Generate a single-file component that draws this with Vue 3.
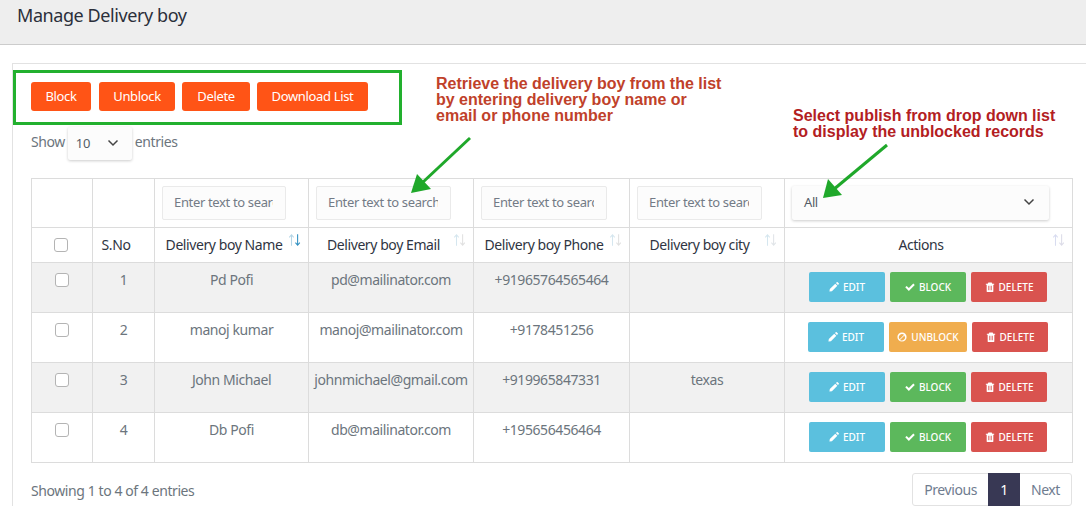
<template>
  <div class="page">
    <header class="top">
      <h1>Manage Delivery boy</h1>
    </header>

    <section class="card">
      <div class="bulk">
        <button v-for="b in bulkButtons" :key="b.label" class="bulk-btn" :style="{ width: b.w + 'px' }">{{ b.label }}</button>
      </div>

      <div class="length">
        <span class="lbl">Show</span>
        <div class="fake-select small">
          <span>10</span>
          <svg class="chev" viewBox="0 0 12 8"><path d="M1.500 1.500 6 6l4.500-4.500" /></svg>
        </div>
        <span class="lbl">entries</span>
      </div>

      <table class="grid">
        <colgroup>
          <col v-for="w in colWidths" :key="w.id" :style="{ width: w.px + 'px' }">
        </colgroup>
        <thead>
          <tr class="filters">
            <td></td>
            <td></td>
            <td v-for="f in filterWidths" :key="f.id">
              <input class="search" :style="{ width: f.w + 'px' }" type="text" placeholder="Enter text to search">
            </td>
            <td>
              <div class="fake-select wide">
                <span>All</span>
                <svg class="chev" viewBox="0 0 12 8"><path d="M1.500 1.500 6 6l4.500-4.500" /></svg>
              </div>
            </td>
          </tr>
          <tr class="heads">
            <th class="check-head"><span class="box"></span></th>
            <th>S.No</th>
            <th v-for="h in heads" :key="h.label">
              {{ h.label }}
              <svg class="sort" viewBox="0 0 16 15">
                <path :stroke="h.up" d="M4 14V2M1.500 4.500 4 1.500l2.500 3" />
                <path :stroke="h.down" d="M11 1v12M8.500 10.500l2.500 3 2.500-3" />
              </svg>
            </th>
          </tr>
        </thead>
        <tbody>
          <tr v-for="(r, i) in rows" :key="r.no" :class="{ odd: i % 2 === 0 }">
            <td><span class="box"></span></td>
            <td>{{ r.no }}</td>
            <td>{{ r.name }}</td>
            <td>{{ r.email }}</td>
            <td>{{ r.phone }}</td>
            <td>{{ r.city }}</td>
            <td class="acts">
              <button class="act info">
                <svg viewBox="0 0 12 12"><path d="M0.500 11.500 1 8.500 7.500 2l2.500 2.500L3.500 11zM8.300 1.200 9.300.3a.8.8 0 0 1 1.100 0l1.300 1.300a.8.8 0 0 1 0 1.100l-1 1z" /></svg>
                EDIT
              </button>
              <button v-if="r.blocked" class="act warn long">
                <svg viewBox="0 0 12 12"><path fill-rule="evenodd" d="M6 .5a5.500 5.500 0 1 0 0 11 5.500 5.500 0 0 0 0-11zM3.200 8.700A3.800 3.800 0 0 1 8.500 3.300zM3.600 9.500l5.300-5.300a3.800 3.800 0 0 1-5.300 5.300z" /></svg>
                UNBLOCK
              </button>
              <button v-else class="act ok">
                <svg viewBox="0 0 12 12"><path d="M.3 6.400 2 4.700l2.600 2.600L10 1.900l1.700 1.700-7.100 7.100z" /></svg>
                BLOCK
              </button>
              <button class="act danger">
                <svg viewBox="0 0 12 12"><path fill-rule="evenodd" d="M4 .5h4l.8 1.500H11v1.200h-1V11a1 1 0 0 1-1 1H3a1 1 0 0 1-1-1V3.200H1V2h2.200zM4.800 4.500H4v5.500h.8zM6.400 4.500h-.8v5.500h.8zM8 4.500h-.8v5.500H8z" /></svg>
                DELETE
              </button>
            </td>
          </tr>
        </tbody>
      </table>

      <div class="foot">
        <span class="info-text">Showing 1 to 4 of 4 entries</span>
        <nav class="pager">
          <a>Previous</a>
          <a class="on">1</a>
          <a>Next</a>
        </nav>
      </div>
    </section>

    <!-- notes drawn on top of the screenshot -->
    <p class="note note-a">Retrieve the delivery boy from the list<br>by entering delivery boy name or<br>email or phone number</p>
    <p class="note note-b">Select publish from drop down list<br>to display the unblocked records</p>
    <svg class="arrows" viewBox="0 0 1086 514">
      <path d="M470 138 422 183" />
      <path d="M887 145 833 190" />
      <polygon points="411,193 417,174 431,189" />
      <polygon points="823,198 828,179 842,195" />
    </svg>
  </div>
</template>

<script setup>
const bulkButtons = [
  { label: 'Block', w: 60 },
  { label: 'Unblock', w: 76 },
  { label: 'Delete', w: 68 },
  { label: 'Download List', w: 111 }
]

const colWidths = [
  { id: 'check', px: 61 },
  { id: 'no', px: 62 },
  { id: 'name', px: 154 },
  { id: 'email', px: 165 },
  { id: 'phone', px: 156 },
  { id: 'city', px: 155 },
  { id: 'actions', px: 288 }
]

const filterWidths = [
  { id: 'name', w: 124 },
  { id: 'email', w: 135 },
  { id: 'phone', w: 126 },
  { id: 'city', w: 125 }
]

const heads = [
  { label: 'Delivery boy Name', up: '#b5d6e6', down: '#2f8fc0' },
  { label: 'Delivery boy Email', up: '#d5e6ef', down: '#e0e0e0' },
  { label: 'Delivery boy Phone', up: '#d5e6ef', down: '#e0e0e0' },
  { label: 'Delivery boy city', up: '#d5e6ef', down: '#e0e4e8' },
  { label: 'Actions', up: '#d8dcf0', down: '#dcdce8' }
]

const rows = [
  { no: 1, name: 'Pd Pofi', email: 'pd@mailinator.com', phone: '+91965764565464', city: '', blocked: false },
  { no: 2, name: 'manoj kumar', email: 'manoj@mailinator.com', phone: '+9178451256', city: '', blocked: true },
  { no: 3, name: 'John Michael', email: 'johnmichael@gmail.com', phone: '+919965847331', city: 'texas', blocked: false },
  { no: 4, name: 'Db Pofi', email: 'db@mailinator.com', phone: '+195656456464', city: '', blocked: false }
]
</script>

<style>
html, body {
  background: #fff;
  overflow: hidden;
}
</style>

<style scoped>
.page {
  position: relative;
  width: 1086px;
  height: 514px;
  overflow: hidden;
  font-family: "Noto Sans", sans-serif;
  font-size: 14px;
  letter-spacing: -0.42px;
  color: #6c757d;
}

.top {
  height: 44px;
  background: #eee;
  border-bottom: 1px solid #ccc;
}

.top h1 {
  margin: 0;
  padding: 3px 0 0 17px;
  font-size: 18px;
  font-weight: 400;
  line-height: 24px;
  color: #2b2f3a;
}

.card {
  margin: 18px 0 0 12px;
  padding-top: 6px;
  border-top: 1px solid #e2e2e2;
  border-left: 1px solid #e2e2e2;
}

.bulk {
  width: 389px;
  height: 55px;
  box-sizing: border-box;
  border: 3px solid #22b02e;
  padding: 9px 0 0 15px;
  display: flex;
  gap: 7px;
}

.bulk-btn {
  height: 29px;
  padding: 0 0 1px;
  border: 0;
  border-radius: 3px;
  background: #ff5416;
  color: #fff;
  font: inherit;
  font-size: 13px;
  letter-spacing: -0.35px;
}

.bulk-btn:first-child {
  margin-right: 1px;
}

.length {
  display: flex;
  align-items: center;
  gap: 3px;
  height: 34px;
  margin: 1px 0 18px 18px;
}

.lbl {
  margin-bottom: 4px;
}

.fake-select {
  display: flex;
  align-items: center;
  justify-content: space-between;
  box-sizing: border-box;
  background: #fcfcfc;
  border-radius: 2px;
  box-shadow: 0 1px 3px rgba(0, 0, 0, 0.2);
  color: #555c66;
  font-size: 13px;
}

.small {
  width: 64px;
  height: 33px;
  padding: 0 13px 0 8px;
}

.wide {
  width: 257px;
  height: 34px;
  margin-left: 7px;
  padding: 0 14px 2px 12px;
}

.chev {
  width: 12px;
  height: 8px;
  fill: none;
  stroke: #444;
  stroke-width: 1.500;
}

.grid {
  width: 1041px;
  margin-left: 18px;
  border-collapse: collapse;
  table-layout: fixed;
  text-align: center;
}

.grid td,
.grid th {
  border: 1px solid #dcdcdc;
  padding: 0;
  overflow: hidden;
  white-space: nowrap;
}

.filters td {
  height: 48px;
  text-align: left;
}

.search {
  display: block;
  box-sizing: border-box;
  height: 34px;
  margin-left: 7px;
  padding: 0 12px 2px 11px;
  border: 1px solid #eaeaea;
  border-radius: 2px;
  background: #fcfcfc;
  font: inherit;
  font-size: 13px;
  letter-spacing: -0.35px;
  outline: none;
}

.search::placeholder {
  color: #737b86;
  opacity: 1;
}

.grid .heads th {
  position: relative;
  height: 32px;
  padding: 0 15px 2px 0;
  font-weight: 400;
  color: #2f3542;
}

.grid .heads th.check-head {
  padding: 0 2px 0 0;
}

.sort {
  position: absolute;
  top: 5px;
  right: 6px;
  width: 14px;
  height: 14px;
  fill: none;
  stroke-width: 1.200;
}

.box {
  display: block;
  box-sizing: border-box;
  width: 14px;
  height: 14px;
  margin: 0 auto;
  border: 1px solid #b4b4b4;
  border-radius: 3px;
  background: #fff;
}

tbody tr {
  height: 50px;
}

.grid tbody td {
  vertical-align: top;
  padding-top: 7px;
  line-height: 20px;
}

tbody tr.odd {
  background: #f1f1f1;
}

tbody td .box {
  margin-top: 3px;
}

.grid tbody td.acts {
  padding: 9px 1px 0 0;
  font-size: 0;
  line-height: 0;
}

.act {
  display: inline-flex;
  align-items: center;
  justify-content: center;
  gap: 4px;
  width: 76px;
  height: 30px;
  margin: 0 2.500px;
  padding: 0;
  border: 0;
  border-radius: 2px;
  color: #fff;
  font: inherit;
  font-size: 10px;
  font-weight: 500;
  letter-spacing: 0;
  vertical-align: top;
}

.act.long {
  width: 78px;
}

.act svg {
  width: 10px;
  height: 10px;
  fill: #fff;
}

.info { background: #5bc0de; }
.ok { background: #5cb85c; }
.warn { background: #f0ad4e; }
.danger { background: #d9534f; }

.foot {
  display: flex;
  justify-content: space-between;
  align-items: center;
  width: 1041px;
  margin: 10px 0 0 18px;
}

.info-text {
  margin-top: 2px;
}

.pager {
  display: flex;
  height: 33px;
  box-sizing: border-box;
  border: 1px solid #e2e2e2;
  border-radius: 3px;
  color: #6f7c8f;
}

.pager a {
  display: flex;
  align-items: center;
  padding: 0 11px;
}

.pager a.on {
  justify-content: center;
  width: 32px;
  box-sizing: border-box;
  margin: -1px 0;
  padding: 0;
  background: #383854;
  color: #fff;
}

/* overlay notes */
.note {
  position: absolute;
  margin: 0;
  font-family: "Liberation Sans", sans-serif;
  font-size: 16px;
  font-weight: 700;
  line-height: 16px;
  letter-spacing: 0;
  white-space: nowrap;
}

.note-a {
  left: 436px;
  top: 76px;
  color: #c0412a;
}

.note-b {
  left: 793px;
  top: 108px;
  color: #b3201f;
}

.arrows {
  position: absolute;
  left: 0;
  top: 0;
  width: 1086px;
  height: 514px;
  pointer-events: none;
}

.arrows path {
  stroke: #1fa82a;
  stroke-width: 3;
  fill: none;
}

.arrows polygon {
  fill: #1fa82a;
}
</style>
